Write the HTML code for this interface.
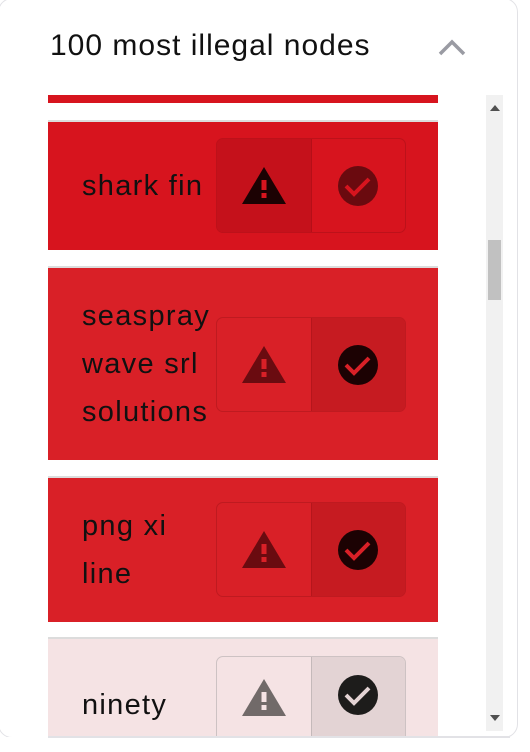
<!DOCTYPE html>
<html><head><style>
*{margin:0;padding:0;box-sizing:border-box}
body{width:530px;height:752px;background:#fff;font-family:"Liberation Sans",sans-serif;position:relative;overflow:hidden}
.card{position:absolute;left:-2px;top:-2px;width:520px;height:740px;border:1.5px solid #e2e2e6;border-radius:14px;background:#fff}
.title{position:absolute;left:50px;top:29px;font-size:30px;letter-spacing:1px;color:#111}
.chev{position:absolute;left:437px;top:38px}
.sb{position:absolute;left:486px;top:95px;width:17px;height:636px;background:#f1f1f1}
.thumb{position:absolute;left:488px;top:240px;width:13px;height:60px;background:#c1c1c1}
.item{position:absolute;left:48px;width:390px;border-top:2px solid #dcdcdc}
.txt{position:absolute;left:34px;font-size:29px;letter-spacing:1.3px;color:#111;line-height:48px}
.tg{position:absolute;left:168px;width:190px;height:95px;border-radius:7px;display:flex;overflow:hidden}
.tg div{flex:1;display:flex;align-items:center;justify-content:center}
</style></head><body>
<div class="card"></div>
<div class="title">100 most illegal nodes</div>
<svg class="chev" width="30" height="20"><path d="M3 16 L15 4 L27 16" stroke="#9a9ba3" stroke-width="3.5" fill="none"/></svg>
<div style="position:absolute;left:48px;top:95px;width:390px;height:8px;background:#d7141e"></div>

<div class="item" style="top:120px;height:130px;background:#d7141e">
 <div class="txt" style="top:40px">shark fin</div>
 <div class="tg" style="top:16px;border:1.5px solid #bd111a">
  <div style="background:#c5111b;border-right:1.5px solid #b50f18"><svg width="46" height="40"><path d="M23 1 L45 38 L1 38Z" fill="#1c0203"/><rect x="20.5" y="14" width="5" height="10" fill="#d7141e"/><rect x="20.5" y="27" width="5" height="5" fill="#d7141e"/></svg></div>
  <div><svg width="42" height="42"><circle cx="21" cy="21" r="20" fill="#6a0a0f"/><path d="M9 21 L17 29 L32 14" stroke="#d7141e" stroke-width="4" fill="none"/></svg></div>
 </div>
</div>

<div class="item" style="top:266px;height:194px;background:#d92027">
 <div class="txt" style="top:24px">seaspray<br>wave srl<br>solutions</div>
 <div class="tg" style="top:49px;border:1.5px solid #bf1a20">
  <div style="border-right:1.5px solid #b5161c"><svg width="46" height="40"><path d="M23 1 L45 38 L1 38Z" fill="#6a0b10"/><rect x="20.5" y="14" width="5" height="10" fill="#d92027"/><rect x="20.5" y="27" width="5" height="5" fill="#d92027"/></svg></div>
  <div style="background:#c61b21"><svg width="42" height="42"><circle cx="21" cy="21" r="20" fill="#1c0203"/><path d="M9 21 L17 29 L32 14" stroke="#d92027" stroke-width="4" fill="none"/></svg></div>
 </div>
</div>

<div class="item" style="top:476px;height:146px;background:#d92027">
 <div class="txt" style="top:24px">png xi<br>line</div>
 <div class="tg" style="top:24px;border:1.5px solid #bf1a20">
  <div style="border-right:1.5px solid #b5161c"><svg width="46" height="40"><path d="M23 1 L45 38 L1 38Z" fill="#6a0b10"/><rect x="20.5" y="14" width="5" height="10" fill="#d92027"/><rect x="20.5" y="27" width="5" height="5" fill="#d92027"/></svg></div>
  <div style="background:#c61b21"><svg width="42" height="42"><circle cx="21" cy="21" r="20" fill="#1c0203"/><path d="M9 21 L17 29 L32 14" stroke="#d92027" stroke-width="4" fill="none"/></svg></div>
 </div>
</div>

<div class="item" style="top:637px;height:99px;background:#f5e3e4;overflow:hidden">
 <div class="txt" style="top:42px">ninety</div>
 <div class="tg" style="top:17px;border:1.5px solid #cdc2c3;height:110px">
  <div style="border-right:1.5px solid #c4b9ba;align-items:flex-start;padding-top:21px"><svg width="46" height="40"><path d="M23 1 L45 38 L1 38Z" fill="#716a69"/><rect x="20.5" y="14" width="5" height="10" fill="#f5e3e4"/><rect x="20.5" y="27" width="5" height="5" fill="#f5e3e4"/></svg></div>
  <div style="background:#e3d3d4;align-items:flex-start;padding-top:17px"><svg width="42" height="42"><circle cx="21" cy="21" r="20" fill="#1d1c1b"/><path d="M9 21 L17 29 L32 14" stroke="#e3d3d4" stroke-width="4" fill="none"/></svg></div>
 </div>
</div>
<div style="position:absolute;left:0;top:737px;width:530px;height:15px;background:#fff"></div>
<div style="position:absolute;left:48px;top:736px;width:462px;height:1.5px;background:#e2e2e6"></div>

<div class="sb"></div>
<div class="thumb"></div>
<svg style="position:absolute;left:489px;top:104px" width="12" height="8"><path d="M1 7 L6 1 L11 7Z" fill="#505050"/></svg>
<svg style="position:absolute;left:489px;top:714px" width="12" height="8"><path d="M1 1 L6 7 L11 1Z" fill="#505050"/></svg>
</body></html>
